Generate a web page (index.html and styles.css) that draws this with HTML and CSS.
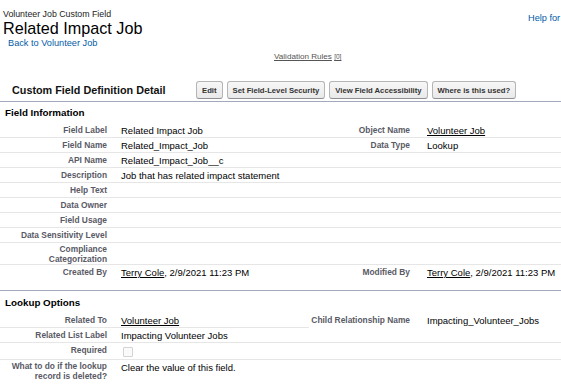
FILE: index.html
```html
<!DOCTYPE html>
<html lang="en">
<head>
  <meta charset="UTF-8">
  <meta name="viewport" content="width=device-width, initial-scale=1.0">
  <title>Custom Field: Related Impact Job</title>
  <link rel="stylesheet" href="styles.css">
</head>
<body>
  <div class="page">
    <div class="pageHeader">
      <div class="ptTitle">
        <div class="crumb">Volunteer Job Custom Field</div>
        <h1>Related Impact Job</h1>
        <a class="back" href="#">Back to Volunteer Job</a>
      </div>
      <a class="help" href="#">Help for this Page</a>
    </div>

    <div class="related">
      <a href="#">Validation Rules</a> <a class="count" href="#">[0]</a>
    </div>

    <div class="block">
      <div class="blockHeader">
        <h2>Custom Field Definition Detail</h2>
        <div class="buttons">
          <button type="button" class="btn">Edit</button>
          <button type="button" class="btn">Set Field-Level Security</button>
          <button type="button" class="btn">View Field Accessibility</button>
          <button type="button" class="btn">Where is this used?</button>
        </div>
      </div>

      <h3>Field Information</h3>
      <table class="detailList">
        <colgroup>
          <col class="c1"><col class="c2"><col class="c3"><col>
        </colgroup>
        <tr>
          <td class="label">Field Label</td>
          <td class="data">Related Impact Job</td>
          <td class="label">Object Name</td>
          <td class="data"><a href="#">Volunteer Job</a></td>
        </tr>
        <tr>
          <td class="label">Field Name</td>
          <td class="data">Related_Impact_Job</td>
          <td class="label">Data Type</td>
          <td class="data">Lookup</td>
        </tr>
        <tr>
          <td class="label">API Name</td>
          <td class="data">Related_Impact_Job__c</td>
          <td class="label"></td>
          <td class="data"></td>
        </tr>
        <tr>
          <td class="label">Description</td>
          <td class="data">Job that has related impact statement</td>
          <td class="label"></td>
          <td class="data"></td>
        </tr>
        <tr>
          <td class="label">Help Text</td>
          <td class="data"></td>
          <td class="label"></td>
          <td class="data"></td>
        </tr>
        <tr>
          <td class="label">Data Owner</td>
          <td class="data"></td>
          <td class="label"></td>
          <td class="data"></td>
        </tr>
        <tr>
          <td class="label">Field Usage</td>
          <td class="data"></td>
          <td class="label"></td>
          <td class="data"></td>
        </tr>
        <tr>
          <td class="label">Data Sensitivity Level</td>
          <td class="data"></td>
          <td class="label"></td>
          <td class="data"></td>
        </tr>
        <tr>
          <td class="label two">Compliance Categorization</td>
          <td class="data"></td>
          <td class="label"></td>
          <td class="data"></td>
        </tr>
        <tr class="last">
          <td class="label">Created By</td>
          <td class="data"><a href="#">Terry Cole</a>, 2/9/2021 11:23 PM</td>
          <td class="label">Modified By</td>
          <td class="data"><a href="#">Terry Cole</a>, 2/9/2021 11:23 PM</td>
        </tr>
      </table>

      <h3 class="sectionTop">Lookup Options</h3>
      <table class="detailList">
        <colgroup>
          <col class="c1"><col class="c2"><col class="c3"><col>
        </colgroup>
        <tr>
          <td class="label">Related To</td>
          <td class="data"><a href="#">Volunteer Job</a></td>
          <td class="label open">Child Relationship Name</td>
          <td class="data open">Impacting_Volunteer_Jobs</td>
        </tr>
        <tr>
          <td class="label">Related List Label</td>
          <td class="data">Impacting Volunteer Jobs</td>
          <td class="label"></td>
          <td class="data"></td>
        </tr>
        <tr>
          <td class="label">Required</td>
          <td class="data"><span class="checkbox"></span></td>
          <td class="label"></td>
          <td class="data"></td>
        </tr>
        <tr class="last">
          <td class="label two">What to do if the lookup record is deleted?</td>
          <td class="data">Clear the value of this field.</td>
          <td class="label"></td>
          <td class="data"></td>
        </tr>
      </table>
    </div>
  </div>
</body>
</html>
```

FILE: styles.css
```css
* {
  box-sizing: border-box;
}

body {
  margin: 0;
  font-family: 'Liberation Sans', Arial, sans-serif;
  color: #000;
  background: #fff;
  overflow: hidden;
}

.page {
  width: 561px;
}

.pageHeader {
  display: grid;
  grid-template-columns: 525px max-content;
  padding: 10px 0 0 3px;
}

.crumb {
  font-size: 8.8px;
  line-height: 9px;
  color: #222;
}

h1 {
  margin: 0;
  font-size: 16.2px;
  line-height: 18px;
  font-weight: normal;
}

.back {
  display: block;
  margin: 1px 0 0 5px;
  font-size: 9.2px;
  line-height: 11px;
  color: #015ba7;
  text-decoration: none;
}

.help {
  margin-top: 3px;
  font-size: 9.2px;
  line-height: 11px;
  color: #015ba7;
  text-decoration: none;
  white-space: nowrap;
}

.related {
  margin-top: 3px;
  padding-left: 274px;
  font-size: 8.1px;
  line-height: 10px;
}

.related a {
  color: #555;
}

.related .count {
  font-size: 6.5px;
}

.blockHeader {
  display: grid;
  grid-template-columns: 196px auto;
  align-items: center;
  margin-top: 17px;
  padding: 2px 0;
  border-bottom: 1px solid #a2aab9;
}

h2 {
  margin: 0;
  padding-left: 12px;
  font-size: 10.8px;
  font-weight: bold;
  color: #111;
}

.buttons {
  display: flex;
  gap: 4px;
}

.btn {
  height: 18px;
  padding: 0 5px;
  font-family: 'Liberation Sans', Arial, sans-serif;
  font-size: 7.7px;
  font-weight: bold;
  color: #333;
  background: linear-gradient(#f7f7f7, #e9e9e9);
  border: 1px solid #b5b5b5;
  border-bottom-color: #8f8f8f;
  border-radius: 3px;
  cursor: pointer;
}

h3 {
  margin: 0;
  height: 21px;
  padding-left: 5px;
  font-size: 9.8px;
  line-height: 21px;
  font-weight: bold;
}

h3.sectionTop {
  height: 23px;
  margin-top: 11px;
  border-top: 1px solid #a2aab9;
  line-height: 23px;
}

.detailList {
  width: 100%;
  border-collapse: collapse;
  table-layout: fixed;
}

.detailList .c1 {
  width: 113px;
}

.detailList .c2 {
  width: 196px;
}

.detailList .c3 {
  width: 110px;
}

.detailList td {
  vertical-align: top;
  border-bottom: 1px solid #e6e6e6;
}

.detailList tr.last td,
.detailList td.open {
  border-bottom: 0;
}

.label {
  padding: 3px 6px 2px 2px;
  text-align: right;
  font-size: 8.4px;
  line-height: 9px;
  font-weight: bold;
  color: #5a5a66;
}

.label.two {
  padding-top: 1px;
  padding-bottom: 0;
  line-height: 10px;
}

.detailList td.label:nth-child(3) {
  padding: 3px 9px 2px 0;
}

.data {
  padding: 2px 4px 1px 8px;
  font-size: 9.5px;
  line-height: 11px;
}

.data a {
  color: #000;
}

.checkbox {
  display: block;
  width: 10px;
  height: 10px;
  margin: 2px 0 1px 2px;
  border: 1px solid #d4d4d4;
  border-radius: 1px;
  background: #fafafa;
}
```
